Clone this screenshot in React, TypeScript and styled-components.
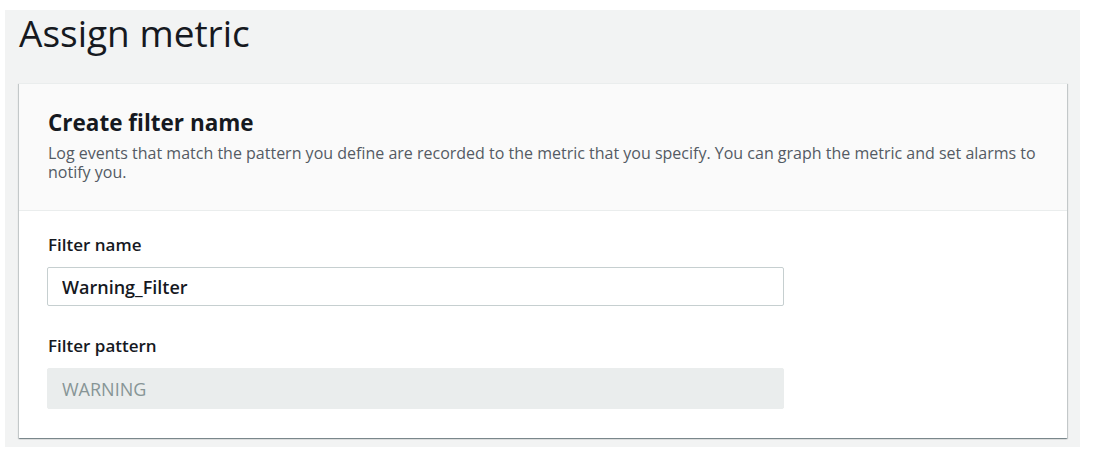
import React from "react";
import styled, { createGlobalStyle } from "styled-components";

const Global = createGlobalStyle`
  html, body { margin: 0; padding: 0; background: #ffffff; }
  body { font-family: "Open Sans", "Noto Sans", sans-serif; color: #16191f; }
  * { box-sizing: border-box; }
`;

const Page = styled.div`
  padding: 10px 31px 0 5px;
`;

const Panel = styled.section`
  background: #f2f3f3;
  padding: 3px 13px 9px 14px;
  height: 437px;
`;

const Title = styled.h1`
  margin: 0 0 30px 0;
  font-size: 37px;
  line-height: 40px;
  font-weight: 400;
  color: #16191f;
`;

const Card = styled.div`
  background: #ffffff;
  border-top: 1px solid #eaeded;
  box-shadow: 0 1px 1px 0 rgba(0, 28, 36, 0.3), 1px 1px 1px 0 rgba(0, 28, 36, 0.15),
    -1px 1px 1px 0 rgba(0, 28, 36, 0.15);
`;

const Header = styled.div`
  background: #fafafa;
  border-bottom: 1px solid #eaeded;
  padding: 25px 29px 28px 29px;
`;

const HeaderTitle = styled.h2`
  margin: 0 0 7px 0;
  font-size: 22.5px;
  line-height: 28px;
  font-weight: 700;
  color: #16191f;
`;

const Description = styled.p`
  margin: 0;
  font-size: 16px;
  line-height: 19px;
  color: #545b64;
`;

const Body = styled.div`
  padding: 23px 29px 29px 29px;
  display: flex;
  flex-direction: column;
`;

const Field = styled.div<{ $gap?: number }>`
  display: flex;
  flex-direction: column;
  margin-top: ${(p) => p.$gap ?? 0}px;
`;

const Label = styled.label`
  font-size: 17px;
  line-height: 22px;
  font-weight: 600;
  color: #16191f;
  margin-bottom: 11px;
`;

const Input = styled.input<{ $disabled?: boolean }>`
  width: 737px;
  height: ${(p) => (p.$disabled ? 41 : 39)}px;
  margin-left: -1px;
  padding: 0 14px;
  font-family: "Open Sans", "Noto Sans", sans-serif;
  font-size: 18px;
  font-weight: ${(p) => (p.$disabled ? 400 : 600)};
  border-radius: 2px;
  outline: none;
  border: 1px solid ${(p) => (p.$disabled ? "#eaeded" : "#c6cfd0")};
  background: ${(p) => (p.$disabled ? "#eaeded" : "#ffffff")};
  color: ${(p) => (p.$disabled ? "#879596" : "#16191f")};
  -webkit-text-fill-color: ${(p) => (p.$disabled ? "#879596" : "#16191f")};
  opacity: 1;
`;

export default function App() {
  return (
    <>
      <Global />
      <Page>
        <Panel>
          <Title>Assign metric</Title>
          <Card>
            <Header>
              <HeaderTitle>Create filter name</HeaderTitle>
              <Description>
                Log events that match the pattern you define are recorded to the metric that you specify. You can graph
                the metric and set alarms to notify you.
              </Description>
            </Header>
            <Body>
              <Field>
                <Label>Filter name</Label>
                <Input defaultValue="Warning_Filter" />
              </Field>
              <Field $gap={29}>
                <Label>Filter pattern</Label>
                <Input $disabled disabled value="WARNING" readOnly />
              </Field>
            </Body>
          </Card>
        </Panel>
      </Page>
    </>
  );
}
